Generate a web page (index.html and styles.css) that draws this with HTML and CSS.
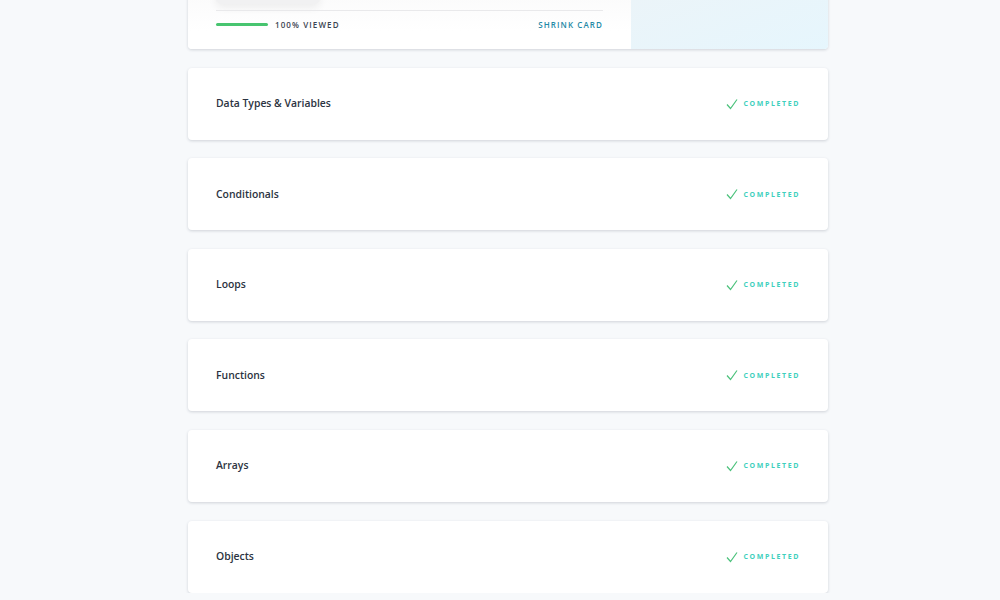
FILE: index.html
```html
<!DOCTYPE html>
<html lang="en">
<head>
    <meta charset="UTF-8">
    <meta name="viewport" content="width=device-width, initial-scale=1.0">
    <title>Course Progress</title>
    <link rel="stylesheet" href="styles.css">
</head>
<body>
    <div class="page">
        <div class="card card-open">
            <div class="card-main">
                <div class="resume-btn"></div>
                <div class="card-footer">
                    <div class="viewed">
                        <span class="bar"></span>
                        <span>100% Viewed</span>
                    </div>
                    <a class="shrink" href="#">Shrink Card</a>
                </div>
            </div>
            <div class="card-side"></div>
        </div>

        <div class="card lesson">
            <span class="lesson-title">Data Types &amp; Variables</span>
            <span class="status"><svg viewBox="0 0 12 12" width="12" height="12"><path d="M1 6.5 L4.5 10.5 L11 1.5" fill="none" stroke="#4cc27c" stroke-width="1.2"/></svg>Completed</span>
        </div>
        <div class="card lesson">
            <span class="lesson-title">Conditionals</span>
            <span class="status"><svg viewBox="0 0 12 12" width="12" height="12"><path d="M1 6.5 L4.5 10.5 L11 1.5" fill="none" stroke="#4cc27c" stroke-width="1.2"/></svg>Completed</span>
        </div>
        <div class="card lesson">
            <span class="lesson-title">Loops</span>
            <span class="status"><svg viewBox="0 0 12 12" width="12" height="12"><path d="M1 6.5 L4.5 10.5 L11 1.5" fill="none" stroke="#4cc27c" stroke-width="1.2"/></svg>Completed</span>
        </div>
        <div class="card lesson">
            <span class="lesson-title">Functions</span>
            <span class="status"><svg viewBox="0 0 12 12" width="12" height="12"><path d="M1 6.5 L4.5 10.5 L11 1.5" fill="none" stroke="#4cc27c" stroke-width="1.2"/></svg>Completed</span>
        </div>
        <div class="card lesson">
            <span class="lesson-title">Arrays</span>
            <span class="status"><svg viewBox="0 0 12 12" width="12" height="12"><path d="M1 6.5 L4.5 10.5 L11 1.5" fill="none" stroke="#4cc27c" stroke-width="1.2"/></svg>Completed</span>
        </div>
        <div class="card lesson">
            <span class="lesson-title">Objects</span>
            <span class="status"><svg viewBox="0 0 12 12" width="12" height="12"><path d="M1 6.5 L4.5 10.5 L11 1.5" fill="none" stroke="#4cc27c" stroke-width="1.2"/></svg>Completed</span>
        </div>
    </div>
</body>
</html>
```

FILE: styles.css
```css
body {
    margin: 0;
    background: #f7f9fb;
    font-family: "Open Sans", "Noto Sans", sans-serif;
    color: #2b3341;
    overflow: hidden;
}
.page {
    width: 640px;
    margin-left: calc(50% - 312px);
    margin-top: -69px;
    display: flex;
    flex-direction: column;
    gap: 18.6px;
}
.card {
    background: #fff;
    border-radius: 4px;
    box-shadow: 0 1px 3px rgba(30, 40, 60, 0.18);
}
.card-open {
    display: flex;
    height: 118px;
    overflow: hidden;
}
.card-main {
    flex: 1;
    padding: 0 28px;
    display: flex;
    flex-direction: column;
    justify-content: flex-end;
    background: linear-gradient(#f3f3f4, #ffffff 85%);
}
.resume-btn {
    width: 104px;
    height: 30px;
    margin-bottom: 6px;
    border-radius: 6px;
    background: #f1f1f2;
    box-shadow: 0 4px 8px rgba(0, 0, 0, 0.06);
}
.card-footer {
    border-top: 1px solid #e9e9eb;
    height: 39px;
    box-sizing: border-box;
    padding-top: 8px;
    display: flex;
    align-items: flex-start;
    justify-content: space-between;
    font-size: 8px;
    font-weight: 600;
    letter-spacing: 1.1px;
    text-transform: uppercase;
}
.viewed {
    display: flex;
    align-items: center;
    gap: 7px;
    color: #3b4351;
}
.bar {
    width: 52px;
    height: 3px;
    border-radius: 2px;
    background: #47c46f;
}
.shrink {
    color: #2489a6;
    text-decoration: none;
}
.card-side {
    width: 197px;
    background: linear-gradient(160deg, #eef3f6, #e6f6fd);
}
.lesson {
    height: 72px;
    box-sizing: border-box;
    padding: 0 28px;
    display: flex;
    align-items: center;
    justify-content: space-between;
}
.lesson-title {
    font-size: 10.4px;
    font-weight: 600;
    color: #2b3341;
    margin-top: -1px;
}
.status {
    display: flex;
    align-items: center;
    gap: 6px;
    font-size: 7px;
    font-weight: 700;
    letter-spacing: 1.6px;
    text-transform: uppercase;
    color: #3fd0bd;
}
.status svg {
    margin-left: 1px;
}
```
